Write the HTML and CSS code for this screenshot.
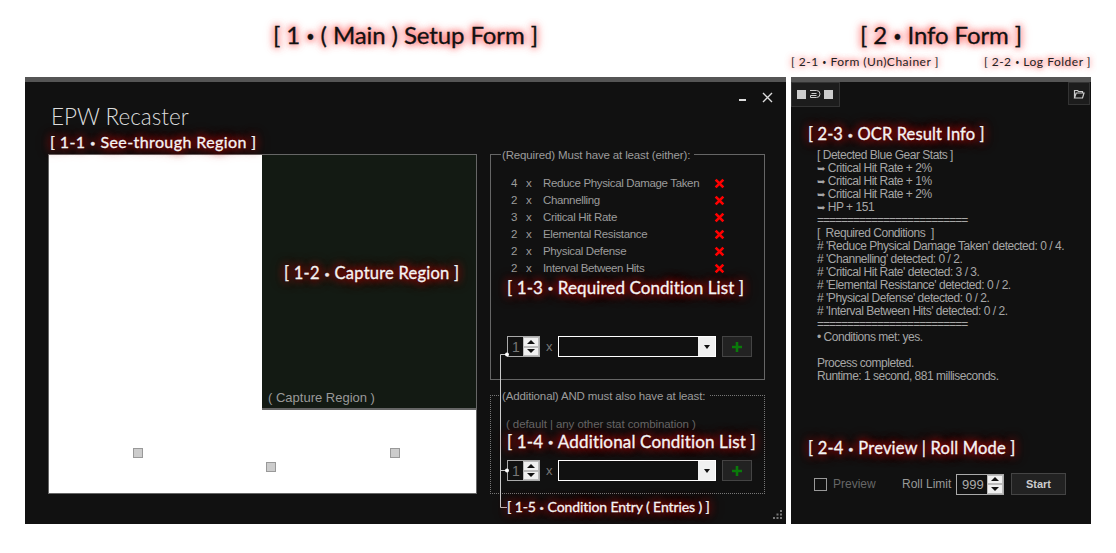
FILE: index.html
```html
<!DOCTYPE html>
<html lang="en">
<head>
    <meta charset="UTF-8">
    <title>EPW Recaster</title>
    <link rel="stylesheet" href="styles.css">
</head>
<body>
    <main class="page">
        <section class="col col-main">
            <header class="col-head">
                <h1 class="form-title">[ 1 <b class="dot">•</b> ( Main ) Setup Form ]</h1>
            </header>
            <div class="window main-window">
                <div class="title-row">
                    <span class="app-title">EPW Recaster</span>
                    <div class="window-btns">
                        <svg width="10" height="10" viewBox="0 0 10 10"><path d="M1 8h7" stroke="#ddd" stroke-width="2"/></svg>
                        <svg width="11" height="11" viewBox="0 0 11 11"><path d="M1 1l9 9M10 1l-9 9" stroke="#ddd" stroke-width="1.4"/></svg>
                    </div>
                </div>
                <div class="main-body">
                    <div class="see-through">
                        <div class="capture"><span class="capture-label">( Capture Region )</span></div>
                        <span class="handle handle-a"></span>
                        <span class="handle handle-b"></span>
                        <span class="handle handle-c"></span>
                    </div>
                    <div class="side">
                        <div class="group group-required">
                            <div class="legend">(Required) Must have at least (either):</div>
                            <ul class="cond-list">
                                <li><span>4</span><span>x</span><span>Reduce Physical Damage Taken</span><svg class="del" viewBox="0 0 10 10"><path d="M1.5 1.5l7 7M8.5 1.5l-7 7"/></svg></li>
                                <li><span>2</span><span>x</span><span>Channelling</span><svg class="del" viewBox="0 0 10 10"><path d="M1.5 1.5l7 7M8.5 1.5l-7 7"/></svg></li>
                                <li><span>3</span><span>x</span><span>Critical Hit Rate</span><svg class="del" viewBox="0 0 10 10"><path d="M1.5 1.5l7 7M8.5 1.5l-7 7"/></svg></li>
                                <li><span>2</span><span>x</span><span>Elemental Resistance</span><svg class="del" viewBox="0 0 10 10"><path d="M1.5 1.5l7 7M8.5 1.5l-7 7"/></svg></li>
                                <li><span>2</span><span>x</span><span>Physical Defense</span><svg class="del" viewBox="0 0 10 10"><path d="M1.5 1.5l7 7M8.5 1.5l-7 7"/></svg></li>
                                <li><span>2</span><span>x</span><span>Interval Between Hits</span><svg class="del" viewBox="0 0 10 10"><path d="M1.5 1.5l7 7M8.5 1.5l-7 7"/></svg></li>
                            </ul>
                            <div class="entry">
                                <div class="spin spin-small"><span class="spin-value">1</span><span class="spin-btns"><i class="up"></i><i class="down"></i></span></div>
                                <span class="times">x</span>
                                <div class="combo"><span class="combo-arrow"></span></div>
                                <button class="add" type="button"><svg width="12" height="12" viewBox="0 0 12 12"><path d="M6 1v10M1 6h10" stroke="#0a7a0a" stroke-width="2.6"/></svg></button>
                            </div>
                        </div>
                        <div class="group group-additional">
                            <div class="legend">(Additional) AND must also have at least:</div>
                            <p class="default-note">( default | any other stat combination )</p>
                            <div class="entry">
                                <div class="spin spin-small"><span class="spin-value">1</span><span class="spin-btns"><i class="up"></i><i class="down"></i></span></div>
                                <span class="times">x</span>
                                <div class="combo"><span class="combo-arrow"></span></div>
                                <button class="add" type="button"><svg width="12" height="12" viewBox="0 0 12 12"><path d="M6 1v10M1 6h10" stroke="#0a7a0a" stroke-width="2.6"/></svg></button>
                            </div>
                        </div>
                    </div>
                </div>
                <svg class="grip" width="10" height="10" viewBox="0 0 10 10" fill="#777"><path d="M7 0h2v2H7zM3.500 3.500h2v2h-2zM7 3.500h2v2H7zM0 7h2v2H0zM3.500 7h2v2h-2zM7 7h2v2H7z"/></svg>

                <svg class="wires" width="14" height="160" viewBox="0 0 14 160" fill="none">
                    <path d="M9 3.500H2.500V156.500H9M2.500 119.500H9" stroke="#ccc"/>
                    <circle cx="9" cy="3.500" r="2" fill="#fff"/>
                    <circle cx="9" cy="119.500" r="2" fill="#fff"/>
                </svg>

                <span class="note note-1-1">[ 1-1 <b class="dot">•</b> See-through Region ]</span>
                <span class="note note-1-2">[ 1-2 <b class="dot">•</b> Capture Region ]</span>
                <span class="note note-1-3">[ 1-3 <b class="dot">•</b> Required Condition List ]</span>
                <span class="note note-1-4">[ 1-4 <b class="dot">•</b> Additional Condition List ]</span>
                <span class="note note-1-5">[ 1-5 <b class="dot">•</b> Condition Entry ( Entries ) ]</span>
            </div>
        </section>

        <section class="col col-info">
            <header class="col-head">
                <h1 class="form-title">[ 2 <b class="dot">•</b> Info Form ]</h1>
                <div class="sub-labels">
                    <span>[ 2-1 <b class="dot">•</b> Form (Un)Chainer ]</span>
                    <span>[ 2-2 <b class="dot">•</b> Log Folder ]</span>
                </div>
            </header>
            <div class="window info-window">
                <div class="info-top">
                    <button class="chain" type="button">
                        <i></i>
                        <svg width="12" height="11" viewBox="0 0 12 11" fill="none" stroke="#ccc"><path d="M1 1.500h6.500a3.500 3.500 0 0 1 0 7H1.500V6.500H7.500M2.500 4.500h5"/></svg>
                        <i></i>
                    </button>
                    <button class="folder" type="button">
                        <svg width="12" height="10" viewBox="0 0 12 10" fill="none" stroke="#ccc" stroke-width="1.200"><path d="M1.500 9V1.500h3l1 1h4V4M1.500 9h8l1.500-5H3.200z"/></svg>
                    </button>
                </div>
                <pre class="log">[ Detected Blue Gear Stats ]
<span class="arrow">➥</span> Critical Hit Rate + 2%
<span class="arrow">➥</span> Critical Hit Rate + 1%
<span class="arrow">➥</span> Critical Hit Rate + 2%
<span class="arrow">➥</span> HP + 151
<span class="rule">=========================</span>
[  Required Conditions  ]
# 'Reduce Physical Damage Taken' detected: 0 / 4.
# 'Channelling' detected: 0 / 2.
# 'Critical Hit Rate' detected: 3 / 3.
# 'Elemental Resistance' detected: 0 / 2.
# 'Physical Defense' detected: 0 / 2.
# 'Interval Between Hits' detected: 0 / 2.
<span class="rule">=========================</span>
• Conditions met: yes.

Process completed.
Runtime: 1 second, 881 milliseconds.</pre>
                <div class="info-bottom">
                    <label class="preview"><span class="check"></span>Preview</label>
                    <span class="roll-label">Roll Limit</span>
                    <div class="spin spin-roll"><span class="spin-value">999</span><span class="spin-btns"><i class="up"></i><i class="down"></i></span></div>
                    <button class="start" type="button">Start</button>
                </div>
                <span class="note note-2-3">[ 2-3 <b class="dot">•</b> OCR Result Info ]</span>
                <span class="note note-2-4">[ 2-4 <b class="dot">•</b> Preview | Roll Mode ]</span>
            </div>
        </section>
    </main>
</body>
</html>
```
FILE: styles.css
```css
* {
    box-sizing: border-box;
}

body {
    margin: 0;
    background: #fff;
    font-family: "Liberation Sans", Arial, sans-serif;
    font-size: 12px;
    color: #9c9c9c;
}

.page {
    display: flex;
    gap: 5px;
    padding-left: 25px;
}

.col-main {
    width: 761px;
}

.col-info {
    width: 300px;
}

.col-head {
    height: 77px;
    padding-top: 21px;
    text-align: center;
}

.form-title {
    margin: 0;
    height: 28px;
    font-family: Lato, sans-serif;
    font-size: 24px;
    font-weight: 400;
    line-height: 28px;
    letter-spacing: -0.1px;
    color: #111;
    -webkit-text-stroke: 0.3px #111;
    text-shadow: 0 0 7px #f66, 0 0 7px #f66, 0 0 12px #f99;
}

.dot {
    font-size: 60%;
    font-weight: 400;
    vertical-align: 0.15em;
}

.sub-labels {
    display: flex;
    justify-content: space-between;
    margin: 5px 0 0;
    font-family: Lato, sans-serif;
    font-size: 12px;
    line-height: 15px;
    letter-spacing: 0.5px;
    color: #222;
    text-shadow: 0 0 6px #f77, 0 0 6px #f77;
}

.window {
    position: relative;
    height: 447px;
    background: #111;
    border-top: 5px solid #555;
}

/* main form */
.title-row {
    display: flex;
    justify-content: space-between;
    height: 72px;
    padding: 21px 13px 0 26px;
}

.app-title {
    font-family: Lato, sans-serif;
    font-size: 22.500px;
    font-weight: 300;
    line-height: 28px;
    color: #ddd;
}

.window-btns {
    display: flex;
    gap: 14px;
    margin-top: -16px;
    align-items: center;
    height: 20px;
}

.main-body {
    display: flex;
    gap: 13px;
    padding-left: 23px;
}

.see-through {
    position: relative;
    width: 429px;
    height: 340px;
    background: #fff;
    border: 1px solid #666;
}

.capture {
    position: absolute;
    top: -1px;
    right: -1px;
    width: 215px;
    height: 256px;
    display: flex;
    align-items: flex-end;
    padding: 0 0 2px 6px;
    background: #131a13;
    border: solid #666;
    border-width: 1px 1px 2px 1px;
    border-left: 0;
}

.capture-label {
    font-size: 13px;
    line-height: 16px;
    color: #999;
}

.handle {
    position: absolute;
    width: 10px;
    height: 10px;
    background: #ccc;
    border: 1px solid #999;
}

.handle-a { left: 84px; top: 293px; }
.handle-b { left: 217px; top: 307px; }
.handle-c { left: 341px; top: 293px; }

.side {
    display: flex;
    flex-direction: column;
    gap: 15px;
    width: 275px;
}

.group {
    padding: 0 0 0 16px;
    border: 1px solid #666;
    font-size: 11.500px;
    letter-spacing: -0.35px;
}

.group-required {
    height: 226px;
}

.group-additional {
    height: 99px;
    border: 1px dotted #777;
}

.legend {
    width: fit-content;
    height: 14px;
    margin: -7px 0 0 -6px;
    padding: 0 4px 0 1px;
    background: #111;
    line-height: 14px;
    letter-spacing: -0.14px;
    color: #9c9c9c;
}

.cond-list {
    margin: 13px 0 0;
    padding: 0;
    list-style: none;
    height: 161px;
}

.cond-list li {
    display: grid;
    grid-template-columns: 15px 17px 171px 12px;
    align-items: center;
    height: 17px;
    padding-left: 4px;
    line-height: 17px;
}

.del {
    width: 11px;
    height: 11px;
    fill: none;
    stroke: #f00;
    stroke-width: 2.4;
}

.entry {
    display: flex;
    align-items: center;
    height: 21px;
}

.spin {
    display: flex;
    align-items: center;
    justify-content: space-between;
    height: 21px;
    border: 1px solid #aaa;
    background: #111;
}

.spin-small {
    width: 33px;
}

.spin-value {
    padding-left: 4px;
    font-size: 14px;
    letter-spacing: 0;
    color: #777;
}

.spin-btns {
    display: flex;
    flex-direction: column;
    width: 16px;
    height: 19px;
    background: #f0f0f0;
}

.spin-btns i {
    flex: 1;
    display: flex;
    align-items: center;
    justify-content: center;
    border: 1px solid #bbb;
}

.up::before,
.down::before {
    content: "";
    border-left: 4px solid transparent;
    border-right: 4px solid transparent;
}

.up::before {
    border-bottom: 4px solid #111;
}

.down::before {
    border-top: 4px solid #111;
}

.times {
    width: 18px;
    text-align: center;
    font-size: 13px;
    color: #777;
}

.combo {
    display: flex;
    justify-content: flex-end;
    width: 158px;
    height: 21px;
    background: #111;
    border: 1px solid #fff;
}

.combo-arrow {
    display: flex;
    align-items: center;
    justify-content: center;
    width: 17px;
    background: #f0f0f0;
}

.combo-arrow::before {
    content: "";
    border-left: 3px solid transparent;
    border-right: 3px solid transparent;
    border-top: 4px solid #111;
}

.add {
    display: flex;
    align-items: center;
    justify-content: center;
    width: 30px;
    height: 21px;
    margin-left: 6px;
    padding: 0;
    background: #222;
    border: 1px solid #444;
}

.default-note {
    margin: 14px 0 29px -1px;
    height: 14px;
    line-height: 14px;
    letter-spacing: -0.08px;
    color: #666;
}

.grip {
    position: absolute;
    right: 3px;
    bottom: 4px;
}

.wires {
    position: absolute;
    left: 473px;
    top: 269px;
}

/* annotations drawn over the screenshot */
.note {
    position: absolute;
    font-family: Lato, sans-serif;
    font-weight: 400;
    line-height: 20px;
    white-space: nowrap;
    color: #f4f4f4;
    -webkit-text-stroke: 0.3px #f4f4f4;
    text-shadow: 0 0 8px #a00, 0 0 8px #a00, 0 0 14px #800;
}

.note-1-1 { left: 25px; top: 50px; font-size: 16px; letter-spacing: 0.4px; }
.note-1-2 { left: 259px; top: 181px; font-size: 16.500px; letter-spacing: 0.23px; }
.note-1-3 { left: 482px; top: 196px; font-size: 17px; letter-spacing: 0.08px; }
.note-1-4 { left: 482px; top: 350px; font-size: 17px; letter-spacing: 0.15px; }
.note-1-5 { left: 482px; top: 415px; font-size: 14px; letter-spacing: -0.1px; }
.note-2-3 { left: 17px; top: 42px; font-size: 16.500px; letter-spacing: 0.1px; }
.note-2-4 { left: 17px; top: 356px; font-size: 16.500px; letter-spacing: 0.2px; }

/* info form */
.info-top {
    display: flex;
    justify-content: space-between;
    align-items: flex-start;
    height: 67px;
    padding-right: 1px;
}

.chain {
    display: flex;
    align-items: center;
    gap: 3px;
    width: 49px;
    height: 25px;
    padding: 0 0 0 5px;
    background: #1c1c1c;
    border: 1px solid #333;
}

.chain i {
    width: 9px;
    height: 9px;
    background: #ccc;
}

.folder {
    display: flex;
    align-items: center;
    justify-content: center;
    width: 22px;
    height: 23px;
    padding: 0;
    background: #1c1c1c;
    border: 1px solid #333;
}

.log {
    height: 324px;
    margin: 0;
    padding: 0 0 0 26px;
    font-family: "Liberation Sans", Arial, sans-serif;
    font-size: 12px;
    line-height: 13px;
    letter-spacing: -0.48px;
    color: #a6a6a6;
}

.rule {
    letter-spacing: -1px;
}

.arrow {
    font-family: "DejaVu Sans", sans-serif;
    font-size: 10px;
}

.info-bottom {
    display: flex;
    align-items: center;
    height: 22px;
    padding-left: 23px;
}

.preview {
    display: flex;
    align-items: center;
    gap: 6px;
    width: 88px;
    color: #666;
}

.check {
    width: 13px;
    height: 13px;
    border: 1px solid #999;
}

.roll-label {
    width: 54px;
    color: #999;
}

.spin-roll {
    width: 48px;
}

.spin-roll .spin-value {
    padding-left: 5px;
    font-size: 13px;
    color: #aaa;
}

.start {
    width: 55px;
    height: 22px;
    margin-left: 7px;
    padding: 0;
    background: #222;
    border: 1px solid #444;
    font-family: "Liberation Sans", Arial, sans-serif;
    font-size: 11px;
    font-weight: 700;
    color: #ccc;
}
```
